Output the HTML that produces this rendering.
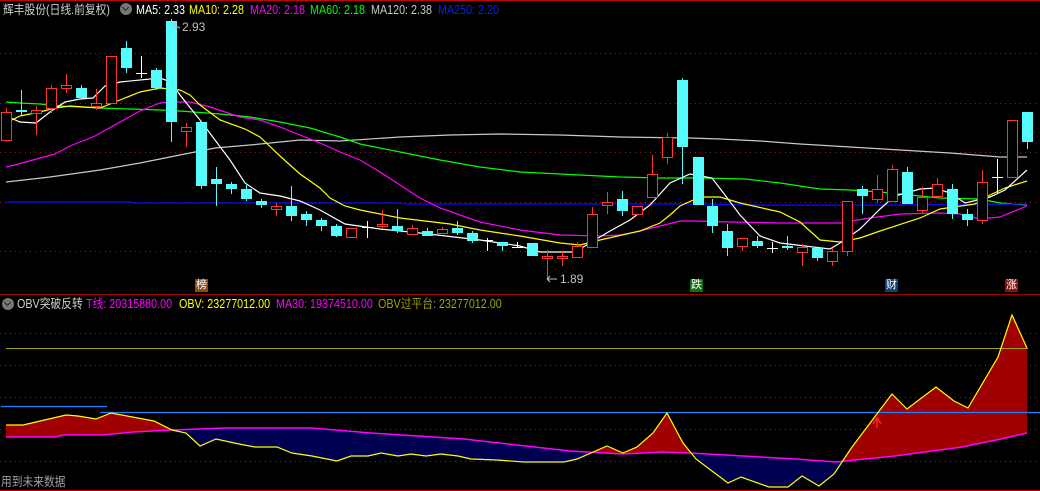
<!DOCTYPE html>
<html><head><meta charset="utf-8"><style>
html,body{margin:0;padding:0;background:#000;width:1040px;height:491px;overflow:hidden}
body{position:relative;font-family:"Liberation Sans","Noto Sans CJK SC",sans-serif}
.t{position:absolute;font-size:12.5px;white-space:nowrap;line-height:14px;transform:scaleX(0.86);transform-origin:0 0}
svg{position:absolute;left:0;top:0}
.tag{position:absolute;width:13px;height:13px;font-size:11px;line-height:13px;text-align:center;color:#fff}
</style></head><body>
<svg id="s" width="1040" height="491" xmlns="http://www.w3.org/2000/svg">
<defs>
<clipPath id="above"><polygon id="ca" points=""/></clipPath>
<clipPath id="below"><polygon id="cb" points=""/></clipPath>
</defs>
<line x1="0" y1="0.5" x2="1040" y2="0.5" stroke="#c00000"/>
<line x1="0" y1="294.5" x2="1040" y2="294.5" stroke="#a00000"/>
<line x1="0" y1="490.5" x2="1040" y2="490.5" stroke="#c00000"/>
<g stroke="#a01818" stroke-dasharray="1,4" stroke-width="1">
<line x1="0" y1="53.5" x2="1040" y2="53.5"/><line x1="0" y1="103.5" x2="1040" y2="103.5"/>
<line x1="0" y1="152.5" x2="1040" y2="152.5"/><line x1="0" y1="202.5" x2="1040" y2="202.5"/>
<line x1="0" y1="251.5" x2="1040" y2="251.5"/>
<line x1="0" y1="333.5" x2="1040" y2="333.5"/><line x1="0" y1="365.5" x2="1040" y2="365.5"/>
<line x1="0" y1="397.5" x2="1040" y2="397.5"/><line x1="0" y1="429.5" x2="1040" y2="429.5"/>
<line x1="0" y1="461.5" x2="1040" y2="461.5"/>
</g>
<g id="ma" fill="none" stroke-width="1.2"></g>
<g id="cd"></g>
<g id="obv"></g>
<text x="182" y="31" fill="#c0c0c0" font-size="12" font-family="Liberation Sans">2.93</text>
<path d="M173 25 L180 28 M173 25 L176 22 M173 25 L176 28" stroke="#c0c0c0" fill="none"/>
<text x="560" y="283" fill="#c0c0c0" font-size="12" font-family="Liberation Sans">1.89</text>
<path d="M547 279 H557 M547 279 L550 276 M547 279 L550 282" stroke="#c0c0c0" fill="none"/>
</svg>
<div class="t" style="left:3px;top:3px;color:#d0d0d0">辉丰股份(日线.前复权)</div>
<div style="position:absolute;left:120px;top:3px;width:12px;height:12px;border-radius:6px;background:#777"></div>
<div style="position:absolute;left:123px;top:5px;width:4px;height:4px;border-right:1.5px solid #222;border-bottom:1.5px solid #222;transform:rotate(45deg)"></div>
<div class="t" style="left:136px;top:3px;color:#fff">MA5: 2.33</div>
<div class="t" style="left:189px;top:3px;color:#ff0">MA10: 2.28</div>
<div class="t" style="left:250px;top:3px;color:#f0f">MA20: 2.18</div>
<div class="t" style="left:310px;top:3px;color:#0f0">MA60: 2.18</div>
<div class="t" style="left:371px;top:3px;color:#c8c8c8">MA120: 2.38</div>
<div class="t" style="left:438px;top:3px;color:#0020ff">MA250: 2.20</div>
<div style="position:absolute;left:2px;top:298px;width:12px;height:12px;border-radius:6px;background:#777"></div>
<div style="position:absolute;left:5px;top:300px;width:4px;height:4px;border-right:1.5px solid #222;border-bottom:1.5px solid #222;transform:rotate(45deg)"></div>
<div class="t" style="left:17px;top:297px;color:#d0d0d0">OBV突破反转</div>
<div class="t" style="left:86px;top:297px;color:#f0f">T线: 20315880.00</div>
<div class="t" style="left:179px;top:297px;color:#ff0">OBV: 23277012.00</div>
<div class="t" style="left:276px;top:297px;color:#f0f">MA30: 19374510.00</div>
<div class="t" style="left:378px;top:297px;color:#a0a000">OBV过平台: 23277012.00</div>
<div class="t" style="left:1px;top:475px;color:#a0a0a0">用到未来数据</div>
<div class="tag" style="left:195px;top:279px;background:#8b4a10">榜</div>
<div class="tag" style="left:690px;top:279px;background:#107010">跌</div>
<div class="tag" style="left:885px;top:279px;background:#104070">财</div>
<div class="tag" style="left:1005px;top:279px;background:#8b1010">涨</div>
<script>
var NS="http://www.w3.org/2000/svg";
function el(p,t,a){var e=document.createElementNS(NS,t);for(var k in a)e.setAttribute(k,a[k]);p.appendChild(e);return e;}
var C=[[6,112,140,108,142,'r'],[21,110,112,90,116,'c'],[36,110,113,106,135,'r'],[51,88,108,85,113,'r'],[66,85,88,74,93,'r'],[81,88,98,85,100,'c'],[96,103,106,89,110,'r'],[111,56,103,56,103,'r'],[126,48,68,41,73,'c'],[141,73,73,56,78,'w'],[156,70,88,68,90,'c'],[171,21,122,19,142,'c'],[186,127,131,123,147,'r'],[201,122,186,122,189,'c'],[216,179,184,167,206,'c'],[231,184,189,182,194,'c'],[246,189,199,184,201,'c'],[261,201,205,199,208,'c'],[276,206,209,203,216,'r'],[291,206,216,186,221,'c'],[306,214,220,211,226,'c'],[321,220,226,218,231,'c'],[336,226,236,224,237,'c'],[351,228,237,228,238,'r'],[367,227,227,221,238,'w'],[382,224,226,210,228,'r'],[397,226,231,209,233,'c'],[412,228,234,225,234,'r'],[427,231,236,228,236,'c'],[442,229,233,227,234,'r'],[457,228,233,221,235,'c'],[472,233,241,231,243,'c'],[487,240,240,238,251,'w'],[502,242,246,242,251,'c'],[517,247,247,242,248,'w'],[532,243,256,243,256,'c'],[547,256,258,250,280,'r'],[562,256,258,252,266,'r'],[577,246,257,242,257,'r'],[592,214,247,207,248,'r'],[607,202,205,192,214,'r'],[622,199,211,191,216,'c'],[637,206,214,206,215,'r'],[652,174,197,155,197,'r'],[667,137,157,133,164,'r'],[682,80,147,78,184,'c'],[698,157,205,157,205,'c'],[712,206,226,199,233,'c'],[727,231,248,224,256,'c'],[742,238,246,238,251,'r'],[757,241,246,236,248,'c'],[772,248,248,242,253,'w'],[787,246,248,236,250,'c'],[802,247,252,244,266,'r'],[817,248,258,248,261,'c'],[832,251,261,248,266,'r'],[847,201,251,201,256,'r'],[862,189,196,186,214,'c'],[877,189,199,175,203,'r'],[892,169,201,165,201,'r'],[907,172,204,167,204,'c'],[922,197,210,187,213,'r'],[937,184,196,178,198,'r'],[952,189,214,184,219,'c'],[967,214,220,209,226,'c'],[982,182,220,170,224,'r'],[997,177,177,159,194,'w'],[1012,120,177,120,178,'r'],[1027,112,142,112,149,'c']];
var cd=document.getElementById('cd');
C.forEach(function(c){var x=c[0],col=c[5]=='r'?'#ff3434':c[5]=='c'?'#54fcfc':'#fff';
el(cd,'line',{x1:x+.5,x2:x+.5,y1:c[3],y2:c[4],stroke:col});
if(c[5]=='w'){el(cd,'line',{x1:x-5,x2:x+6,y1:c[1]+.5,y2:c[1]+.5,stroke:col});}
else if(c[5]=='r'){el(cd,'rect',{x:x-5+.5,y:c[1]+.5,width:10,height:Math.max(c[2]-c[1],1),fill:'#000',stroke:col});}
else el(cd,'rect',{x:x-5,y:c[1],width:11,height:Math.max(c[2]-c[1],1.5),fill:col});});
var ma=document.getElementById('ma');
function pl(p,pts,col,w){el(p,'polyline',{points:pts,stroke:col,fill:'none','stroke-width':w||1.2});}
pl(ma,"6,182 50,177 100,170 140,163 180,155 215,148 250,145 300,140 340,141 400,137 450,135 500,134 560,135 620,137 690,138 720,139 760,141 800,144 850,147 900,150 950,153 1000,157 1027,157","#c8c8c8");
pl(ma,"6,102 20,103 40,104 60,106 100,108 160,110 180,111 220,114 250,117 280,122 310,128 340,137 360,144 400,152 440,160 480,167 520,172 580,175 620,177 660,178 700,178 745,179 780,183 820,189 850,190 880,192 900,194 940,198 980,199 1000,203 1027,205","#00ff00");
pl(ma,"6,202 130,202 135,203 400,203 405,204 700,204 760,205 900,205 1027,204","#0010ff");
pl(ma,"6,167 15,165 40,158 55,154 70,146 95,136 120,122 140,111 160,103 171,102 190,102 210,107 240,117 260,120 280,127 300,135 320,143 340,152 360,160 380,172 400,185 420,198 440,208 460,215 480,222 520,230 560,235 600,236 620,235 640,231 660,226 680,221 695,221 730,222 780,223 840,223 870,218 900,214 940,213 960,214 980,219 1000,217 1027,206","#ff00ff");
pl(ma,"6,123 20,116 40,112 55,108 70,106 100,108 120,100 140,92 160,88 180,90 190,95 200,105 220,120 245,129 260,137 280,156 300,174 320,188 330,198 345,206 360,210 400,218 450,224 480,230 520,236 560,243 580,245 600,240 640,231 660,223 670,215 680,206 700,197 720,197 740,203 780,212 800,222 820,240 840,242 860,238 880,231 920,218 940,209 975,204 990,195 1005,188 1027,181","#ffff00");
pl(ma,"6,116 20,122 36,123 50,112 65,102 80,99 93,98 105,86 120,82 160,78 171,82 180,95 200,120 215,140 230,160 245,183 260,193 280,196 300,201 320,210 345,224 380,229 420,233 480,240 520,246 540,252 575,252 590,243 610,231 630,220 650,205 670,183 690,174 712,178 725,195 740,215 760,236 780,243 830,249 840,243 860,229 880,209 895,196 920,189 935,188 950,193 965,203 990,197 1005,190 1027,170","#ffffff");
var O="6,425 23,425 66,415 78,416 96,419 111,413 154,421 172,430 186,433 200,446 216,439 239,444 255,447 277,447 292,453 312,456 337,461 351,456 368,456 381,453 398,456 411,454 426,456 441,454 458,456 471,459 497,460 524,462 564,462 577,459 607,446 623,453 637,447 653,433 667,413 683,443 696,459 728,483 741,477 769,487 788,487 802,476 819,486 834,474 852,447 892,394 907,409 936,387 954,401 968,408 998,357 1012,315 1027,348";
var M="6,437 56,437 63,435 103,435 133,432 172,430 199,429 225,428 312,428 371,433 464,439 570,451 623,454 663,452 690,453 796,459 836,462 895,456 962,447 1001,439 1027,433";
var Mr=M.split(' ').reverse().join(' ');
document.getElementById('ca').setAttribute('points',M+" 1027,300 6,300");
document.getElementById('cb').setAttribute('points',M+" 1027,491 6,491");
var ob=document.getElementById('obv');
el(ob,'polygon',{points:O+" "+Mr,fill:'#a00000','clip-path':'url(#above)'});
el(ob,'polygon',{points:O+" "+Mr,fill:'#000050','clip-path':'url(#below)'});
el(ob,'line',{x1:6,x2:1028,y1:348.5,y2:348.5,stroke:'#a0a000'});
el(ob,'line',{x1:1,x2:107,y1:406.5,y2:406.5,stroke:'#2080ff','stroke-width':1.3});
el(ob,'line',{x1:100,x2:1040,y1:412.5,y2:412.5,stroke:'#2080ff','stroke-width':1.3});
pl(ob,M,"#ff00ff",1.5);
pl(ob,O,"#ffff00",1.2);
el(ob,'path',{d:"M877 428 V420 M873 424 L877 418 L881 424",stroke:'#ff2020',fill:'none','stroke-width':1.5});
</script>
</body></html>
